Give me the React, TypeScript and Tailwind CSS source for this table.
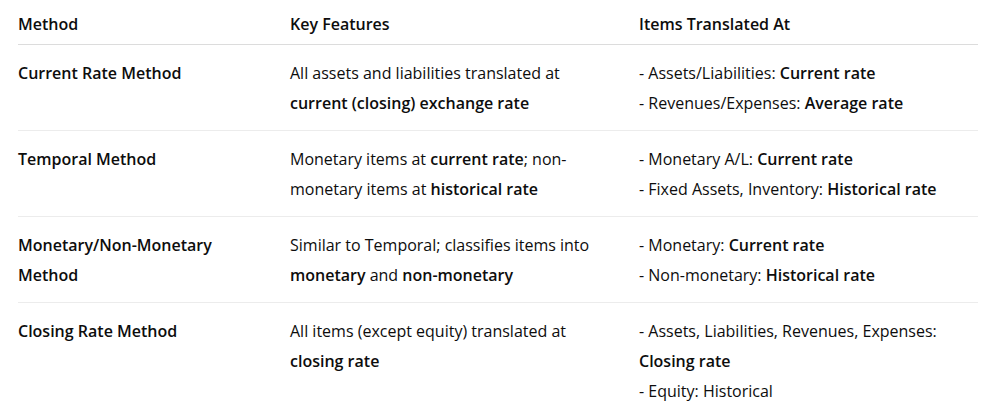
import React from 'react';

type Cell = React.ReactNode;

const rows: Cell[][] = [
  [
    'Current Rate Method',
    <>All assets and liabilities translated at <b className="font-semibold">current (closing) exchange rate</b></>,
    <>- Assets/Liabilities: <b className="font-semibold">Current rate</b><br />- Revenues/Expenses: <b className="font-semibold">Average rate</b></>,
  ],
  [
    'Temporal Method',
    <>Monetary items at <b className="font-semibold">current rate</b>; non-monetary items at <b className="font-semibold">historical rate</b></>,
    <>- Monetary A/L: <b className="font-semibold">Current rate</b><br />- Fixed Assets, Inventory: <b className="font-semibold">Historical rate</b></>,
  ],
  [
    'Monetary/Non-Monetary Method',
    <>Similar to Temporal; classifies items into <b className="font-semibold">monetary</b> and <b className="font-semibold">non-monetary</b></>,
    <>- Monetary: <b className="font-semibold">Current rate</b><br />- Non-monetary: <b className="font-semibold">Historical rate</b></>,
  ],
  [
    'Closing Rate Method',
    <>All items (except equity) translated at <b className="font-semibold">closing rate</b></>,
    <>- Assets, Liabilities, Revenues, Expenses: <b className="font-semibold">Closing rate</b><br />- Equity: Historical</>,
  ],
];

export default function App() {
  return (
    <div className="min-h-[408px] bg-white pl-[18px] pr-[5px] text-[16px] leading-[30px] text-[#0d0d0d] [font-family:'Segoe_UI','Open_Sans',sans-serif]">
      {/* Header */}
      <div className="grid grid-cols-[272px_349px_1fr] border-b border-[#dcdcdc] pt-[9px] pb-[5px] font-semibold">
        <div>Method</div>
        <div>Key Features</div>
        <div>Items Translated At</div>
      </div>

      {rows.map((row, i) => (
        <div
          key={i}
          className={`grid grid-cols-[272px_349px_1fr] pt-[13px] pb-[12px] ${i < rows.length - 1 ? 'border-b border-[#ececec]' : ''}`}
        >
          <div className="pr-[20px] font-semibold">{row[0]}</div>
          <div className="pr-[20px]">{row[1]}</div>
          <div className="pr-[20px]">{row[2]}</div>
        </div>
      ))}
    </div>
  );
}
